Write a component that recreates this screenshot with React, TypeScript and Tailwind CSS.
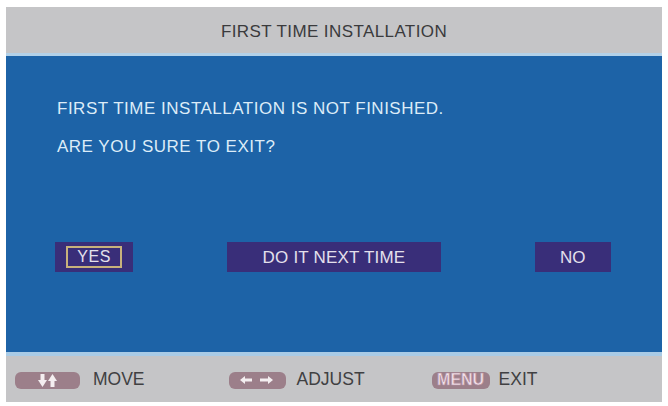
import React from "react";

const font = { fontFamily: '"Liberation Sans", Arial, sans-serif' };

const Key: React.FC<{ children: React.ReactNode; className?: string }> = ({ children, className = "" }) => (
  <span
    className={`flex items-center justify-center rounded-[6px] bg-[#9c7f8a] h-[17px] ${className}`}
  >
    {children}
  </span>
);

const UpDown = () => (
  <svg width="22" height="13" viewBox="0 0 22 13" fill="#f4eef0">
    {/* down arrow */}
    <rect x="3.5" y="0" width="4" height="7" />
    <polygon points="1,6 10,6 5.5,13" />
    {/* up arrow */}
    <rect x="13.5" y="6" width="4" height="7" />
    <polygon points="11,7 20,7 15.5,0" />
  </svg>
);

const LeftRight = () => (
  <svg width="34" height="10" viewBox="0 0 34 10" fill="#f4eef0">
    <rect x="4" y="3.5" width="8" height="3" />
    <polygon points="0,5 5,1 5,9" />
    <rect x="20" y="3.5" width="8" height="3" />
    <polygon points="33,5 28,1 28,9" />
  </svg>
);

export default function App() {
  return (
    <div className="w-[668px] h-[406px] bg-white pt-[7px] px-[6px]" style={font}>
      <div className="w-[656px] flex flex-col">
        {/* title bar */}
        <div className="h-[46px] bg-[#c5c5c7] flex items-center justify-center pt-[3px]">
          <span className="text-[17px] text-[#3a3a3c] tracking-[0.4px] leading-none">
            FIRST TIME INSTALLATION
          </span>
        </div>
        <div className="h-[3px] bg-[#b3d1e8]" />

        {/* message area */}
        <div className="h-[296px] bg-[#1d63a7] flex flex-col px-[51px] pt-[44px]">
          <p className="text-[17px] leading-none text-[#dcecf8] tracking-[0.5px]">
            FIRST TIME INSTALLATION IS NOT FINISHED.
          </p>
          <p className="mt-[21px] text-[17px] leading-none text-[#dcecf8] tracking-[0.5px]">
            ARE YOU SURE TO EXIT?
          </p>

          <div className="mt-[87px] flex items-center -ml-[2px]">
            <div className="w-[80px] h-[30px] bg-[#392e79] flex items-center justify-center">
              <span className="px-[9px] h-[22px] border-2 border-[#c8b27c] flex items-center text-[16px] leading-none text-[#e4e0ec] tracking-[0.6px]">
                YES
              </span>
            </div>
            <div className="ml-[94px] w-[218px] h-[30px] bg-[#392e79] flex items-center justify-center text-[17px] leading-none text-[#e4e0ec] tracking-[0.2px]">
              DO IT NEXT TIME
            </div>
            <div className="ml-[94px] w-[78px] h-[30px] bg-[#392e79] flex items-center justify-center text-[17px] leading-none text-[#e4e0ec]">
              NO
            </div>
          </div>
        </div>
        <div className="h-[4px] bg-[#a9cbe6]" />

        {/* key hints */}
        <div className="h-[46px] bg-[#c5c5c7] flex items-center pl-[9px] pt-[2px] text-[17.5px] leading-none text-[#404042]">
          <Key className="w-[65px]">
            <UpDown />
          </Key>
          <span className="ml-[13px]">MOVE</span>
          <Key className="ml-[84px] w-[57px]">
            <LeftRight />
          </Key>
          <span className="ml-[11px]">ADJUST</span>
          <Key className="ml-[67px] w-[58px] text-[16px] font-bold text-[#f1e2ea]">
            <span className="[-webkit-text-stroke:0.6px_#b88fa2]">MENU</span>
          </Key>
          <span className="ml-[9px]">EXIT</span>
        </div>
      </div>
    </div>
  );
}
